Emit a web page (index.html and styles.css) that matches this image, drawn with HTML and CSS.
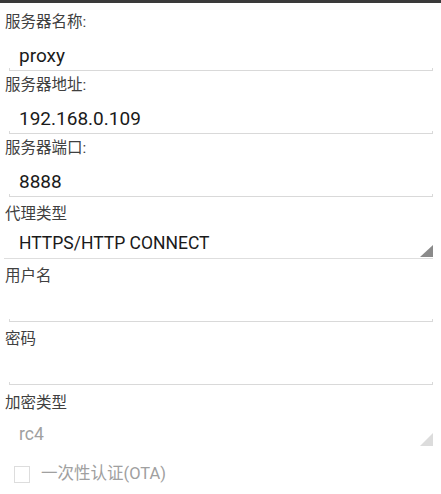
FILE: index.html
```html
<!DOCTYPE html>
<html lang="zh-CN">
<head>
<meta charset="utf-8">
<title>服务器设置</title>
<link rel="stylesheet" href="styles.css">
</head>
<body>
<div class="statusbar"></div>
<main class="form">
  <section class="field">
    <div class="label">服务器名称:</div>
    <div class="value">proxy</div>
    <div class="underline"></div>
  </section>
  <section class="field">
    <div class="label">服务器地址:</div>
    <div class="value">192.168.0.109</div>
    <div class="underline"></div>
  </section>
  <section class="field field-gap">
    <div class="label">服务器端口:</div>
    <div class="value">8888</div>
    <div class="underline"></div>
  </section>
  <section class="field field-gap">
    <div class="label">代理类型</div>
    <div class="spinner">
      <span class="spinner-text">HTTPS/HTTP CONNECT</span>
      <svg class="tri" width="13" height="12" viewBox="0 0 13 12"><polygon points="13,0 13,12 0,12" fill="#8a8a8a"/></svg>
    </div>
  </section>
  <section class="field field-gap">
    <div class="label">用户名</div>
    <div class="value empty"></div>
    <div class="underline"></div>
  </section>
  <section class="field field-gap-l">
    <div class="label">密码</div>
    <div class="value empty"></div>
    <div class="underline"></div>
  </section>
  <section class="field">
    <div class="label">加密类型</div>
    <div class="spinner disabled">
      <span class="spinner-text">rc4</span>
      <svg class="tri" width="13" height="13" viewBox="0 0 13 13"><polygon points="13,0 13,13 0,13" fill="#dcdcdc"/></svg>
    </div>
  </section>
  <div class="check">
    <span class="box"></span>
    <span class="check-text">一次性认证(OTA)</span>
  </div>
  <div class="divider"></div>
</main>
</body>
</html>
```

FILE: styles.css
```css
html, body {
  margin: 0;
  padding: 0;
  background: #ffffff;
}
body {
  font-family: Roboto, "Noto Sans CJK SC", sans-serif;
  color: #333;
  overflow: hidden;
}
.statusbar {
  height: 3px;
  background: #3a3a3a;
}
.form {
  padding-top: 9px;
}
.field {
  margin-bottom: 4px;
}
.field.field-gap {
  margin-bottom: 7px;
}
.field.field-gap-l {
  margin-bottom: 8px;
}
.label {
  font-size: 15.5px;
  line-height: 20px;
  height: 20px;
  padding-left: 5px;
  color: #404040;
}
.value {
  font-size: 19px;
  line-height: 24px;
  height: 24px;
  padding: 12px 0 0 19px;
  color: #1a1a1a;
}
.value.empty {
  padding-top: 9px;
}
.underline {
  height: 2px;
  margin: 0 8px 0 9px;
  border: 1px solid #d9d9d9;
  border-top: 0;
}
.spinner {
  display: flex;
  justify-content: space-between;
  align-items: flex-end;
  margin: 0 8px 0 4px;
  padding: 7px 0 1px 15px;
  border-bottom: 1px solid #dedede;
}
.spinner-text {
  font-size: 17.5px;
  line-height: 24px;
  margin-bottom: 2px;
  color: #1a1a1a;
}
.tri {
  display: block;
}
.spinner.disabled {
  padding-top: 9px;
  border-bottom-color: transparent;
}
.spinner.disabled .spinner-text {
  margin-bottom: 0;
  color: #a0a0a0;
}
.check {
  display: flex;
  align-items: center;
  gap: 11px;
  padding: 10px 0 0 14px;
  height: 24px;
}
.box {
  width: 14px;
  height: 15px;
  border: 1px solid #dddddd;
  background: #fff;
}
.check-text {
  font-size: 16.5px;
  line-height: 24px;
  color: #a0a0a0;
}
.divider {
  height: 2px;
  margin: 9px 8px 0 10px;
  background: #e4e4e4;
}
```
